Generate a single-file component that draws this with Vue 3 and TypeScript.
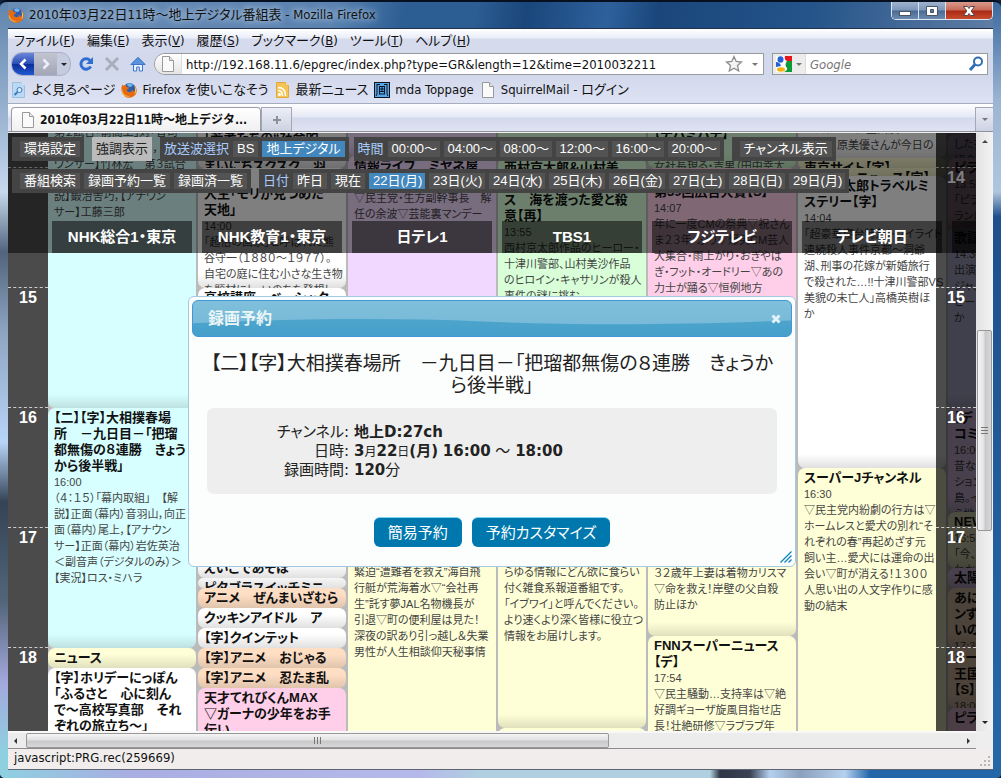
<script setup lang="ts">
import { ref } from 'vue'

interface Program {
  height: number
  genre: string
  title?: string
  time?: string
  text?: string
}
interface Channel {
  name: string
  programs: Program[]
}
interface MenuItem {
  label: string
  key: string
}

const address = ref('http://192.168.11.6/epgrec/index.php?type=GR&length=12&time=2010032211')
const query = ref('')

const menus: MenuItem[] = [
  { label: 'ファイル', key: 'F' },
  { label: '編集', key: 'E' },
  { label: '表示', key: 'V' },
  { label: '履歴', key: 'S' },
  { label: 'ブックマーク', key: 'B' },
  { label: 'ツール', key: 'T' },
  { label: 'ヘルプ', key: 'H' },
]
const bookmarks = [
  { icon: 'smart', label: 'よく見るページ' },
  { icon: 'fox', label: 'Firefox を使いこなそう' },
  { icon: 'rss', label: '最新ニュース' },
  { icon: 'mda', label: 'mda Toppage' },
  { icon: 'page', label: 'SquirrelMail - ログイン' },
]
const times = ['00:00～', '04:00～', '08:00～', '12:00～', '16:00～', '20:00～']
const days = ['22日(月)', '23日(火)', '24日(水)', '25日(木)', '26日(金)', '27日(土)', '28日(日)', '29日(月)']
const hours = [14, 15, 16, 17, 18]

const channels: Channel[] = [
  {
    name: 'NHK総合1・東京',
    programs: [
      { height: 20, genre: 'sports' },
      {
        height: 286,
        genre: 'sports',
        text: '第２試合「前高上」対「香司\n　　　　【解説】　　，\nウンサー】竹林宏　第３試合\n\n説】鍛治舎巧，【アナウン\nサー】工藤三郎',
      },
      {
        height: 240,
        genre: 'sports',
        title: '【二】【字】大相撲春場\n所　－九日目－「把瑠\n都無傷の８連勝　きょう\nから後半戦」',
        time: '16:00',
        text: '（４：１５）「幕内取組」　【解\n説】正面（幕内）音羽山，向正\n面（幕内）尾上，【アナウン\nサー】正面（幕内）岩佐英治\n＜副音声（デジタルのみ）＞\n【実況】ロス・ミハラ',
      },
      { height: 20, genre: 'news', title: 'ニュース' },
      { height: 140, genre: 'plain', title: '【字】ホリデーにっぽん\n「ふるさと　心に刻ん\nで～高校写真部　それ\nぞれの旅立ち～」' },
    ],
  },
  {
    name: 'NHK教育1・東京',
    programs: [
      { height: 26, genre: 'plain' },
      { height: 28, genre: 'plain', title: '「若者たちの“社会的' },
      { height: 12, genre: 'plain', title: 'まいにちスクスク　羽' },
      {
        height: 120,
        genre: 'plain',
        title: '　　　　　日曜美術館\n人生「モリが見つめた\n天地」',
        time: '14:00',
        text: '「超俗の画家」と呼ばれた熊\n谷守一（１８８０～１９７７）。\n自宅の庭に住む小さな生き物\nを題材にし、いのちを発想し',
      },
      { height: 270, genre: 'plain', title: '高校講座　ベーシック' },
      { height: 20, genre: 'plain', title: 'えいごであそぼ' },
      { height: 10, genre: 'plain', title: 'ピタゴラスイッチミニ' },
      { height: 20, genre: 'anime', title: 'アニメ　ぜんまいざむら' },
      { height: 20, genre: 'plain', title: 'クッキンアイドル　ア' },
      { height: 20, genre: 'plain', title: '【字】クインテット' },
      { height: 20, genre: 'anime', title: '【字】アニメ　おじゃる' },
      { height: 20, genre: 'anime', title: '【字】アニメ　忍たま乱' },
      { height: 120, genre: 'variety', title: '天才てれびくんMAX\n▽ガーナの少年をお手\n伝い' },
    ],
  },
  {
    name: '日テレ1',
    programs: [
      { height: 54, genre: 'info' },
      { height: 342, genre: 'info', title: '情報ライブ　ミヤネ屋', time: '13:55', text: '▽民主党・生方副幹事長　解\n任の余波▽芸能裏マンデー' },
      {
        height: 310,
        genre: 'news',
        title: 'news every.',
        time: '16:53',
        text: '密着ドキュメント▽海の守り\n最前線▽冬の海に挑む男達\n緊迫“遭難者を救え”海自飛\n行艇が荒海着水▽“会社再\n生”託す夢JAL名物機長が\n引退▽町の便利屋は見た！\n深夜の訳あり引っ越し＆失業\n男性が人生相談仰天秘事情',
      },
    ],
  },
  {
    name: 'TBS1',
    programs: [
      { height: 56, genre: 'drama' },
      {
        height: 340,
        genre: 'drama',
        title: '西村京太郎＆山村美\n紗サスペン\nス　海を渡った愛と殺\n意【再】',
        time: '13:55',
        text: '西村京太郎作品のヒーロー・\n十津川警部、山村美沙作品\nのヒロイン・キャサリンが殺人\n事件の謎に挑む',
      },
      {
        height: 230,
        genre: 'news',
        title: 'イブニングワイド',
        time: '16:53',
        text: '今日のニュースをお伝えする\n報道番組。政治から街のあ\nらゆる情報にどん欲に食らい\n付く雑食系報道番組です。\n「イブワイ」と呼んでください。\nより速くより深く皆様に役立つ\n情報をお届けします。',
      },
      { height: 100, genre: 'news' },
    ],
  },
  {
    name: 'フジテレビ',
    programs: [
      { height: 22, genre: 'drama' },
      { height: 44, genre: 'drama', title: '【チバミバチ】', time: '13:30', text: '女社長現る・吉男（田中幸太' },
      { height: 14, genre: 'variety' },
      {
        height: 317,
        genre: 'variety',
        title: '第39回広告大賞【S】',
        time: '14:07',
        text: '年に一度CMの祭典▽祝さん\nま２３年・ぶり▽爆笑CM芸人\n大集合・雨上がり・おぎやは\nぎ・フット・オードリー▽あの\n力士が踊る▽恒例地方',
      },
      {
        height: 137,
        genre: 'news',
        title: 'スーパーニュース',
        time: '16:53',
        text: '今日のできごと▽特集\n▽追跡ドキュメント\n３２歳年上妻は着物カリスマ\n▽命を救え！岸壁の父自殺\n防止ほか',
      },
      {
        height: 180,
        genre: 'news',
        title: 'FNNスーパーニュース\n【デ】',
        time: '17:54',
        text: '▽民主騒動…支持率は▽絶\n好調ギョーザ旋風目指せ店\n長！壮絶研修▽ラブラブ年',
      },
    ],
  },
  {
    name: 'テレビ朝日',
    programs: [
      { height: 17, genre: 'plain' },
      { height: 39, genre: 'plain', text: '　スタジオに生出演\n　　　原美優さんが今日の' },
      { height: 10, genre: 'news', title: '東京サイト【字】' },
      { height: 8, genre: 'news', title: '　　　　ニュース【字】' },
      {
        height: 292,
        genre: 'plain',
        title: '　　　太郎トラベルミ\nステリー【字】',
        time: '14:04',
        text: '「超豪華寝台特急トワイライト\n連続殺人事件京都～洞爺\n湖、刑事の花嫁が新婚旅行\nで殺された…!!十津川警部VS\n美貌の未亡人」高橋英樹ほ\nか',
      },
      {
        height: 340,
        genre: 'news',
        title: 'スーパーJチャンネル',
        time: '16:30',
        text: '▽民主党内紛劇の行方は▽\nホームレスと愛犬の別れ“そ\nれぞれの春”再起めざす元\n飼い主…愛犬には運命の出\n会い▽町が消える！１３００\n人思い出の人文字作りに感\n動の結末',
      },
    ],
  },
  {
    name: '',
    programs: [
      { height: 32, genre: 'info' },
      { height: 24, genre: 'info', text: 'した衣\n紹介' },
      { height: 70, genre: 'variety', title: 'ピラ', time: '13:55', text: '「ピラ\nランド' },
      { height: 180, genre: 'music', title: '歌謡', time: '14:30', text: '出演\nジャ、\nピー\nか' },
      { height: 104, genre: 'info', title: '【デ\nコミ', time: '16:00', text: '昔な\nション\n島。イ\nら地' },
      { height: 56, genre: 'news', title: 'NEWS', time: '16:59', text: '「今、\nわか' },
      { height: 20, genre: 'info', title: '太陽' },
      { height: 60, genre: 'anime', title: 'あに\nンず\nいの', time: '17:30' },
      { height: 60, genre: 'anime', title: 'ドー\n王国\n【S】', time: '18:00' },
      { height: 60, genre: 'variety', title: 'ピラ' },
    ],
  },
]
</script>

<template>
  <div class="window">
    <header class="titlebar">
      <svg class="i16" viewBox="0 0 16 16"><use href="#fox" /></svg>
      <h1>2010年03月22日11時～地上デジタル番組表 - Mozilla Firefox</h1>
      <div class="winbtns">
        <button aria-label="最小化"><svg viewBox="0 0 14 12"><rect x="1.500" y="6.500" width="11" height="4" fill="#fff" stroke="#4b5566" /></svg></button>
        <button aria-label="最大化"><svg viewBox="0 0 14 12"><path d="M1.500 1.500h11v9h-11zM5.500 4.500h3v3h-3z" fill="#fff" fill-rule="evenodd" stroke="#4b5566" /></svg></button>
        <button class="close" aria-label="閉じる"><svg viewBox="0 0 14 12"><path d="M1.500 1.500h4L7 3.500l1.500-2h4L9.200 6l3.300 4.500h-4L7 8.500l-1.500 2h-4L4.800 6z" fill="#fff" stroke="#59454a" /></svg></button>
      </div>
    </header>

    <svg class="defs" aria-hidden="true">
      <symbol id="fox" viewBox="0 0 16 16">
        <circle cx="8.500" cy="7.500" r="6.500" fill="#2b5fae" />
        <path d="M6 2q4-2 6 1l-2 2-3-.5z" fill="#6fb4e8" />
        <path d="M1.200 2.500 3 4q1-1.200 2.600-1.300L5 4.700l3 .8-.3 1.200-1.900.8.700 2c1.500 1.300 3.800.8 4.600-.4L9.600 8.500C12 7.500 13.200 9 12.700 10.800c2-2.800 1.500-5.800-.1-7.800 3.300 2 4 6.500 2 9.500-2.200 3.300-7.300 4.200-10.700 1.900C.5 12-.4 7 1.200 2.500z" fill="#e56a12" />
        <path d="M1.200 6.500c0 4.500 3.300 8 8 7.700-3.200 1.600-7.800-.5-8.400-4.700z" fill="#f9b234" />
        <path d="M13.500 4c1.800 2.300 2 5.300.6 7.800l-.7-.2c.9-2.600.9-5 .1-7.600z" fill="#ffd24d" />
      </symbol>
      <symbol id="page" viewBox="0 0 16 16">
        <path d="M2.500.5h7l4 4v11h-11z" fill="#fafafa" stroke="#999" />
        <path d="M9.500.5v4h4" fill="#e6e6e6" stroke="#999" />
      </symbol>
      <symbol id="smart" viewBox="0 0 16 16">
        <path d="M1.500.5h9l3 3v12h-12z" fill="#b9d9f5" stroke="#9dc0e0" />
        <path d="M10.500.5v3h3" fill="#eaf5ff" stroke="#b8d2e8" />
        <circle cx="8.500" cy="8" r="2.500" fill="#d9ecfc" stroke="#3e78bd" />
        <path d="M6.500 10 3.500 13" stroke="#3e78bd" stroke-width="2" />
      </symbol>
      <symbol id="rss" viewBox="0 0 16 16">
        <path d="M1.500.5h9l3 3v12h-12z" fill="#f8c453" stroke="#e2a93c" />
        <path d="M10.500.5v3h3" fill="#fff0c6" stroke="#e2b75a" />
        <circle cx="4.500" cy="12.500" r="1.500" fill="#fff" />
        <path d="M3 8.500q4.500 0 4.500 5.500M3 5.500q7.500 0 7.500 8.500" fill="none" stroke="#fff" stroke-width="1.500" />
      </symbol>
      <symbol id="mda" viewBox="0 0 16 16">
        <rect width="16" height="16" fill="#10131c" />
        <rect x="1" y="1" width="14" height="14" fill="#55a7ec" />
        <path d="M3 2v10l-1 2M13 2v10l1 2M3 2.500h3M10 2.500h3M5.500 4v8M10.500 4v8M5 4.500h6M5 7h6M5 9.500h6M5 12h6M8 4v5" fill="none" stroke="#10131c" />
      </symbol>
    </svg>

    <div class="client">
      <nav class="menubar">
        <button v-for="m in menus" :key="m.key">{{ m.label }}(<u>{{ m.key }}</u>)</button>
      </nav>

      <div class="navbar">
        <div class="history">
          <button class="back" aria-label="戻る"><svg class="i16" viewBox="0 0 16 16"><path d="M10.500 3.500 6 8l4.500 4.500" fill="none" stroke="#fff" stroke-width="2.500" /></svg></button>
          <button class="fwd" aria-label="進む"><svg class="i16" viewBox="0 0 16 16"><path d="M5.500 3.500 10 8l-4.500 4.500" fill="none" stroke="#eef" stroke-width="2.500" /></svg></button>
          <button class="drop" aria-label="履歴一覧"><i class="tri"></i></button>
        </div>
        <button class="tool" aria-label="更新"><svg class="i16" viewBox="0 0 16 16"><path d="M12 4.500A5.200 5.200 0 1 0 12.700 10.500" fill="none" stroke="#2f6fd0" stroke-width="3" /><path d="M15 1v7H8z" fill="#2f6fd0" /></svg></button>
        <button class="tool" aria-label="中止"><svg class="i16" viewBox="0 0 16 16"><path d="m2 2 12 12M14 2 2 14" stroke="#a9adb9" stroke-width="3" /></svg></button>
        <button class="tool" aria-label="ホーム"><svg class="i16" viewBox="0 0 16 16"><path d="M8 1.500 1 8.500h2.500V15h3.200v-4h2.600v4h3.200V8.500H15z" fill="#e8f1ff" stroke="#3f76c9" /><path d="M8 1.500 1 8.500h14z" fill="#5d93dd" stroke="#3f76c9" /></svg></button>
        <div class="urlbox">
          <span class="ident"><svg class="i16" viewBox="0 0 16 16"><use href="#page" /></svg></span>
          <input v-model="address" aria-label="アドレス" />
          <svg class="star" viewBox="0 0 18 18"><path d="m9 1.500 2.200 5 5.300.5-4 3.600 1.200 5.400L9 13.200 4.300 16l1.200-5.400-4-3.600 5.300-.5z" fill="#f4f4f4" stroke="#8c8c8c" stroke-width="1.300" /></svg>
          <i class="tri dim"></i>
        </div>
        <div class="search">
          <button class="engine" aria-label="検索エンジン">
            <svg class="i16" viewBox="0 0 16 16"><path d="M0 0h16v16H0z" fill="#fff" /><path d="M9 0h7v5h-5q-3-1-2-5z" fill="#e8151b" /><path d="M11 5h5v11H8q4-2 3-4-3-3 0-7z" fill="#0a9a38" /><ellipse cx="4.500" cy="3.500" rx="3" ry="3.300" fill="#2461d8" /><path d="M0 6q4 0 5 4l-5 1z" fill="#2461d8" /><ellipse cx="5" cy="13.500" rx="4" ry="2.200" fill="#f5b30b" /></svg>
            <i class="tri dim"></i>
          </button>
          <input v-model="query" placeholder="Google" aria-label="検索" />
          <button class="go" aria-label="検索する"><svg class="i16" viewBox="0 0 16 16"><circle cx="10" cy="5.500" r="4" fill="none" stroke="#2f6cb4" stroke-width="2" /><path d="M7 8.500 2 14" stroke="#2f6cb4" stroke-width="3" /></svg></button>
        </div>
      </div>

      <nav class="bookmarks">
        <a v-for="b in bookmarks" :key="b.label" href="#"><svg class="i16" viewBox="0 0 16 16"><use :href="'#' + b.icon" /></svg>{{ b.label }}</a>
      </nav>

      <div class="tabs">
        <button class="tab"><svg class="i16" viewBox="0 0 16 16"><use href="#page" /></svg>2010年03月22日11時～地上デジタ...</button>
        <button class="newtab" aria-label="新しいタブ"><svg viewBox="0 0 10 10"><path d="M4 1h2v3h3v2H6v3H4V6H1V4h3z" fill="#8d9099" /></svg></button>
        <button class="alltabs" aria-label="タブ一覧"><i class="tri dim"></i></button>
      </div>

      <main class="content">
        <div class="viewport">
          <div class="guide">
            <div class="hours">
              <div v-for="h in hours" :key="h" class="hour">{{ h }}</div>
            </div>
            <section v-for="(c, ci) in channels" :key="ci" class="channel">
              <article v-for="(p, pi) in c.programs" :key="pi" :class="['program', p.genre]" :style="{ height: p.height + 'px' }">
                <h3 v-if="p.title">{{ p.title }}</h3>
                <time v-if="p.time">{{ p.time }}</time>
                <p v-if="p.text">{{ p.text }}</p>
              </article>
            </section>
          </div>

          <div class="hours shade">
            <div v-for="h in hours" :key="h" class="hour">{{ h }}</div>
          </div>

          <div class="floating">
            <div class="row">
              <nav class="group"><a href="#">環境設定</a></nav>
              <nav class="group lit"><a href="#">強調表示</a></nav>
              <nav class="group"><b>放送波選択</b><a href="#">BS</a><a href="#" class="on">地上デジタル</a></nav>
              <nav class="group near"><b>時間</b><a v-for="t in times" :key="t" href="#" class="hourlink">{{ t }}</a></nav>
              <nav class="group"><a href="#">チャンネル表示</a></nav>
            </div>
            <div class="row">
              <nav class="group"><a href="#">番組検索</a><a href="#">録画予約一覧</a><a href="#">録画済一覧</a></nav>
              <nav class="group"><b>日付</b><a href="#">昨日</a><a href="#">現在</a><a v-for="(d, i) in days" :key="d" href="#" :class="['day', { on: i === 0 }]">{{ d }}</a></nav>
            </div>
            <div class="names">
              <div v-for="(c, ci) in channels" :key="ci" class="name">{{ c.name }}</div>
            </div>
          </div>

          <div class="dialog" role="dialog" aria-labelledby="dlg-title">
            <div class="dlg-head">
              <svg class="gloss" viewBox="0 0 600 36" preserveAspectRatio="none"><path d="M0 0H600V20C480 25 380 25 290 21S100 18 0 23z" fill="#fff" fill-opacity=".25" /></svg>
              <h2 id="dlg-title">録画予約</h2>
              <button aria-label="閉じる"><svg viewBox="0 0 10 10"><path d="m1.500 1.500 7 7M8.500 1.500l-7 7" stroke="#e4f2fa" stroke-width="3" /></svg></button>
            </div>
            <p class="headline">【二】【字】大相撲春場所　－九日目－「把瑠都無傷の８連勝　きょうか<br>ら後半戦」</p>
            <dl>
              <dt>チャンネル:</dt>
              <dd><strong>地上D:27ch</strong></dd>
              <dt>日時:</dt>
              <dd><strong>3</strong><small>月</small><strong>22</strong><small>日</small><strong>(月)</strong> <strong>16:00</strong> ～ <strong>18:00</strong></dd>
              <dt>録画時間:</dt>
              <dd><strong>120</strong>分</dd>
            </dl>
            <div class="actions">
              <button>簡易予約</button>
              <button>予約カスタマイズ</button>
            </div>
            <svg class="grip" viewBox="0 0 12 12"><path d="M.5 11.500l11-11M4.500 11.500l7-7M8.500 11.500l3-3" stroke="#0a84bd" stroke-width="1.300" /></svg>
          </div>
        </div>

        <div class="vscroll">
          <i class="tri up"></i>
          <div class="thumb"><span></span></div>
          <i class="tri"></i>
        </div>
        <div class="hscroll">
          <i class="tri left"></i>
          <div class="thumb"><span></span></div>
          <i class="tri right"></i>
        </div>
      </main>

      <footer class="status">
        <span>javascript:PRG.rec(259669)</span>
        <svg viewBox="0 0 12 12"><path d="M9 1h2v2H9zM5 5h2v2H5zM9 5h2v2H9zM1 9h2v2H1zM5 9h2v2H5zM9 9h2v2H9z" fill="#bbb5b5" /></svg>
      </footer>
    </div>
  </div>
</template>

<style>
html,
body {
  margin: 0;
  background: #10203a;
}
</style>

<style scoped>
* {
  box-sizing: border-box;
  margin: 0;
  padding: 0;
}
button,
input {
  border: 0;
  background: none;
  font: inherit;
  color: inherit;
}
a {
  color: inherit;
  text-decoration: none;
}
.defs {
  position: absolute;
  width: 0;
  height: 0;
}
.i16 {
  width: 16px;
  height: 16px;
  flex: none;
}
.tri {
  width: 0;
  height: 0;
  border: 3px solid transparent;
  border-top-color: #222;
  border-bottom: 0;
  flex: none;
}
.tri.dim {
  border-top-color: #777;
}
.tri.up {
  border: 3px solid transparent;
  border-bottom-color: #444;
  border-top: 0;
}
.tri.left {
  border: 3px solid transparent;
  border-right-color: #333;
  border-left: 0;
}
.tri.right {
  border: 3px solid transparent;
  border-left-color: #333;
  border-right: 0;
}

.window {
  height: 100vh;
  min-height: 600px;
  display: flex;
  flex-direction: column;
  padding: 0 8px 8px;
  border-radius: 7px 7px 5px 5px;
  border-top: 2px solid #06101f;
  overflow: hidden;
  font: 13px/16px "DejaVu Sans Condensed", "Noto Sans CJK JP", sans-serif;
  color: #111;
  background:
    linear-gradient(180deg, #5f84ad 0, #a3bbd6 130px, #c8d8ee 190px, #52647c 250px, #8ea5c0 330px, #b8d4f8 440px, #344355 500px, #54657a 600px, #a3a8dc 680px, #8fd0e0 750px) left / 8px 100% no-repeat,
    linear-gradient(180deg, #3a689e 0, #9cb5d4 100px, #b0c5de 190px, #1d4f8c 215px, #2466a8 700px) right / 8px 100% no-repeat,
    linear-gradient(90deg, #8fd0e0 0, #a8aee2 130px, #b5b9ea 420px, #b0cfe0 480px, #b0cfe0 710px, #2f3645 720px, #3a4355 750px, #b5d0ef 770px, #8aa0bc 800px, #b5d0ef 845px, #2466a8 870px) bottom / 100% 8px no-repeat,
    linear-gradient(100deg, #6a8cb4 0, #5b82b0 330px, #2c5d93 400px, #2c5d93 470px, #1a467b 520px, #2e619c 600px, #1a467b 650px, #24548a 800px, #5e7ca4 980px);
}
.titlebar {
  height: 26px;
  flex: none;
  display: flex;
  align-items: center;
  gap: 5px;
}
.titlebar h1 {
  flex: 1;
  font-size: 13px;
  font-weight: 400;
  font-feature-settings: "palt";
  text-shadow: 0 0 6px #bcd0e6, 0 0 10px #a9c2de;
}
.winbtns {
  display: flex;
  align-self: flex-start;
  border: 1px solid #dbe5f1;
  border-top: 0;
  border-radius: 0 0 5px 5px;
  overflow: hidden;
}
.winbtns button {
  width: 27px;
  height: 17px;
  border-right: 1px solid #dbe5f1;
  background: linear-gradient(#9fb3ce 0, #7c96b8 48%, #496a94 52%, #6b8ab0);
}
.winbtns .close {
  width: 46px;
  border: 0;
  background: linear-gradient(#d99a8c 0, #c66a58 48%, #a82814 52%, #c84b2c);
}
.winbtns svg {
  width: 14px;
  height: 12px;
  display: block;
  margin: 0 auto;
}
.client {
  flex: 1;
  min-height: 0;
  display: flex;
  flex-direction: column;
  border-top: 1px solid #223248;
  background: #d3d9ec;
}
.menubar {
  height: 23px;
  flex: none;
  display: flex;
  align-items: center;
  gap: 12px;
  padding-left: 6px;
  font-feature-settings: "palt";
  background: linear-gradient(#fff 0, #e9edf8 9px, #d5daed 10px);
}
.navbar {
  height: 24px;
  flex: none;
  display: flex;
  align-items: center;
  padding: 0 5px 0 3px;
}
.history {
  display: flex;
  height: 24px;
  width: 60px;
  border: 1px solid #a9b0c8;
  border-radius: 11px;
  overflow: hidden;
  background: #c6cce0;
  margin-right: 2px;
}
.history button {
  display: flex;
  align-items: center;
  justify-content: center;
  width: 22px;
}
.history .back {
  background: linear-gradient(#6a86d8 0, #2c50b8 48%, #0c2f9c 52%, #2257d0);
}
.history .fwd {
  width: 23px;
  background: linear-gradient(#c2c5d0, #a2a6b6);
}
.history .drop {
  width: 13px;
}
.tool {
  width: 26px;
  height: 20px;
  display: flex;
  align-items: center;
  justify-content: center;
}
.urlbox {
  flex: 1;
  height: 22px;
  display: flex;
  align-items: center;
  margin: 0 8px 0 3px;
  padding-right: 5px;
  border: 1px solid #9a9a9a;
  border-radius: 11px 0 0 11px;
  background: #fff;
}
.ident {
  width: 27px;
  height: 20px;
  display: flex;
  align-items: center;
  justify-content: center;
  border-radius: 10px 0 0 10px;
  background: linear-gradient(#fff, #e4e4e4);
  border-right: 1px solid #ddd;
}
.urlbox input {
  flex: 1;
  min-width: 0;
  height: 20px;
  padding-left: 4px;
  outline: 0;
}
.star {
  width: 18px;
  height: 18px;
  margin-right: 9px;
}
.search {
  width: 216px;
  height: 22px;
  display: flex;
  align-items: center;
  border: 1px solid #9a9a9a;
  background: #fff;
}
.engine {
  width: 33px;
  height: 20px;
  display: flex;
  align-items: center;
  gap: 4px;
  padding-left: 3px;
  background: #ececec;
  border-right: 1px solid #ddd;
}
.search input {
  flex: 1;
  min-width: 0;
  height: 20px;
  padding-left: 4px;
  outline: 0;
}
.search input::placeholder {
  color: #777;
  font-style: italic;
  opacity: 1;
}
.go {
  width: 22px;
  height: 16px;
}
.bookmarks {
  height: 28px;
  flex: none;
  display: flex;
  align-items: center;
  gap: 6px;
  padding-left: 3px;
  font-feature-settings: "palt";
  border-bottom: 1px solid #a8adbd;
  background: linear-gradient(#d3d9ec, #dde3f3);
}
.bookmarks a {
  display: flex;
  align-items: center;
  gap: 5px;
}
.tabs {
  height: 28px;
  flex: none;
  display: flex;
  align-items: flex-end;
  padding-left: 3px;
  background: linear-gradient(#fff, #e4e8f5 13px, #d3d9ec 14px, #dfe3f2);
  border-bottom: 1px solid #8f929c;
}
.tab {
  width: 250px;
  height: 24px;
  display: flex;
  align-items: center;
  gap: 4px;
  padding-left: 8px;
  border: 1px solid #9b9da6;
  border-bottom: 0;
  border-radius: 4px 4px 0 0;
  background: linear-gradient(#fff, #f0f0f0);
  font-size: 12px;
  font-weight: 700;
  white-space: nowrap;
}
.newtab,
.alltabs {
  width: 31px;
  height: 24px;
  display: flex;
  align-items: center;
  justify-content: center;
  border: 1px solid #a5a8b4;
  border-bottom: 0;
  background: linear-gradient(#eceef7, #cdd2e2);
}
.newtab svg {
  width: 10px;
  height: 10px;
}
.alltabs {
  width: 18px;
  margin-left: auto;
  border-right: 0;
}

.content {
  flex: 1;
  min-height: 0;
  display: grid;
  grid-template-columns: 1fr 17px;
  grid-template-rows: 1fr 18px;
  border-top: 1px solid #eee;
  background: #eee;
}
.viewport {
  position: relative;
  overflow: hidden;
  background: #bbb;
  font-family: "Liberation Sans", "Noto Sans CJK JP", sans-serif;
}
.guide {
  display: flex;
  height: 0;
  margin-top: -31px;
}
.hours {
  width: 40px;
  height: 800px;
  flex: none;
  padding-top: 65px;
  background: #4b4b4b;
  color: #fff;
}
.hour {
  height: 120px;
  border-top: 1px dashed #ccc;
  padding-top: 1px;
  text-align: center;
  font-size: 16px;
  line-height: 18px;
  font-weight: 700;
}
.shade {
  position: absolute;
  top: -31px;
  right: 0;
  background: rgba(0, 0, 0, 0.7);
}
.channel {
  width: 150px;
  flex: none;
}
.program {
  width: 148px;
  overflow: hidden;
  padding: 2px 0 0 6px;
  border-radius: 7px;
  font-size: 11px;
  line-height: 16px;
  white-space: pre;
  font-feature-settings: "palt";
  color: #444;
  background: linear-gradient(0deg, rgba(0, 0, 0, 0.12), rgba(0, 0, 0, 0) 14px) #fff;
}
.program h3 {
  font-size: 13px;
  line-height: 16px;
  font-weight: 700;
  color: #111;
}
.program time {
  display: block;
}
.sports {
  background-color: #d7ffff;
}
.news {
  background-color: #ffffd7;
}
.anime {
  background-color: #ffdfc4;
}
.variety {
  background-color: #ffcfe9;
}
.info {
  background-color: #f0d8ff;
}
.drama {
  background-color: #d8ffd8;
}
.music {
  background-color: #d8d8ff;
}

.floating {
  position: absolute;
  inset: 0 0 auto 0;
  height: 120px;
  padding: 4px 0 0 4px;
  background: rgba(0, 0, 0, 0.5);
  display: flex;
  flex-direction: column;
  gap: 8px;
  overflow: hidden;
}
.row {
  display: flex;
  gap: 8px;
}
.group {
  display: flex;
  flex: none;
  gap: 4px;
  height: 24px;
  padding: 4px 4px 4px 8px;
  background: #444;
  color: #fff;
  font-size: 13px;
  line-height: 16px;
}
.group.near {
  margin-left: -3px;
  padding-left: 4px;
}
.group b {
  font-weight: 400;
  color: #a8cbff;
  margin-left: -4px;
}
.group.near b {
  margin-left: 0;
}
.group a {
  padding: 0 4px;
  background: #535353;
  font-feature-settings: "palt";
  white-space: nowrap;
}
.group a.on {
  background: #4287bd;
}
.group .hourlink {
  width: 52px;
}
.group .day {
  width: 56px;
}
.group.lit {
  background: #bbb;
  padding-left: 0;
  padding-right: 0;
  color: #222;
}
.group.lit a {
  background: none;
}
.names {
  display: flex;
  gap: 10px;
  margin: 20px 0 0 40px;
}
.name {
  width: 140px;
  height: 32px;
  flex: none;
  background: rgba(0, 0, 0, 0.5);
  color: #fff;
  font-size: 15px;
  line-height: 31px;
  font-weight: 700;
  text-align: center;
  font-feature-settings: "palt";
}

.dialog {
  position: absolute;
  left: 180px;
  top: 163px;
  width: 608px;
  padding: 3px;
  border: 1px solid #a6c9e2;
  border-radius: 6px;
  background: #fcfdfd;
  color: #222;
  font-feature-settings: "palt";
  font-family: "DejaVu Sans", "Noto Sans CJK JP", sans-serif;
}
.dlg-head {
  position: relative;
  height: 37px;
  display: flex;
  align-items: center;
  justify-content: space-between;
  padding: 0 10px 0 15px;
  border: 1px solid #4297d7;
  border-radius: 6px;
  background: linear-gradient(#55abcf, #459fca);
  overflow: hidden;
}
.gloss {
  position: absolute;
  inset: 0;
  width: 100%;
  height: 100%;
}
.dlg-head h2 {
  position: relative;
  font-size: 16px;
  line-height: 20px;
  color: #eaf5f7;
}
.dlg-head button {
  position: relative;
  width: 10px;
  height: 10px;
  line-height: 0;
}
.headline {
  height: 44px;
  margin-top: 15px;
  text-align: center;
  white-space: nowrap;
  font-size: 19px;
  line-height: 22px;
}
dl {
  display: grid;
  grid-template-columns: 142px 1fr;
  grid-auto-rows: 19px;
  column-gap: 5px;
  margin: 12px 15px 0;
  padding: 15px 0 14px;
  border-radius: 7px;
  background: #eee;
  font-size: 15px;
  line-height: 19px;
}
dt {
  text-align: right;
}
dd {
  font-feature-settings: normal;
}
small {
  font-size: 12px;
  line-height: 12px;
}
.actions {
  display: flex;
  justify-content: center;
  gap: 10px;
  margin: 23px 0 16px;
}
.actions button {
  height: 30px;
  padding: 0 14px;
  border-top: 1px solid #77d5f7;
  border-radius: 6px;
  background: #0078ae;
  color: #fff;
  font-size: 15px;
  line-height: 28px;
}
.grip {
  position: absolute;
  right: 3px;
  bottom: 3px;
  width: 12px;
  height: 12px;
}

.vscroll {
  display: flex;
  flex-direction: column;
  align-items: center;
  padding: 7px 0;
  background: linear-gradient(90deg, #e3e3e3, #f3f3f3);
}
.vscroll .thumb {
  width: 15px;
  height: 201px;
  margin: 187px 0 auto;
  border: 1px solid #989898;
  border-radius: 2px;
  background: linear-gradient(90deg, #f5f5f5, #e2e2e2 45%, #c9c9cc 55%, #d8d8da);
  display: flex;
  align-items: center;
  justify-content: center;
}
.vscroll span {
  width: 7px;
  height: 8px;
  background: repeating-linear-gradient(#777 0 1px, transparent 1px 3px);
}
.hscroll {
  display: flex;
  align-items: center;
  padding: 0 6px;
  border-top: 2px solid #f8f8f8;
  border-bottom: 1px solid #8c8c8c;
  background: #ececec;
}
.hscroll .thumb {
  width: 61%;
  height: 15px;
  margin: 0 auto 0 9px;
  border: 1px solid #989898;
  border-radius: 2px;
  background: linear-gradient(#f5f5f5, #e2e2e2 45%, #c9c9cc 55%, #d8d8da);
  display: flex;
  align-items: center;
  justify-content: center;
}
.hscroll span {
  width: 8px;
  height: 7px;
  background: repeating-linear-gradient(90deg, #777 0 1px, transparent 1px 3px);
}
.status {
  height: 21px;
  flex: none;
  display: flex;
  align-items: center;
  justify-content: space-between;
  padding: 0 2px 2px 6px;
  background: #f0edec;
  border-bottom: 1px solid #5d6472;
}
.status svg {
  width: 12px;
  height: 12px;
  align-self: flex-end;
}
</style>
